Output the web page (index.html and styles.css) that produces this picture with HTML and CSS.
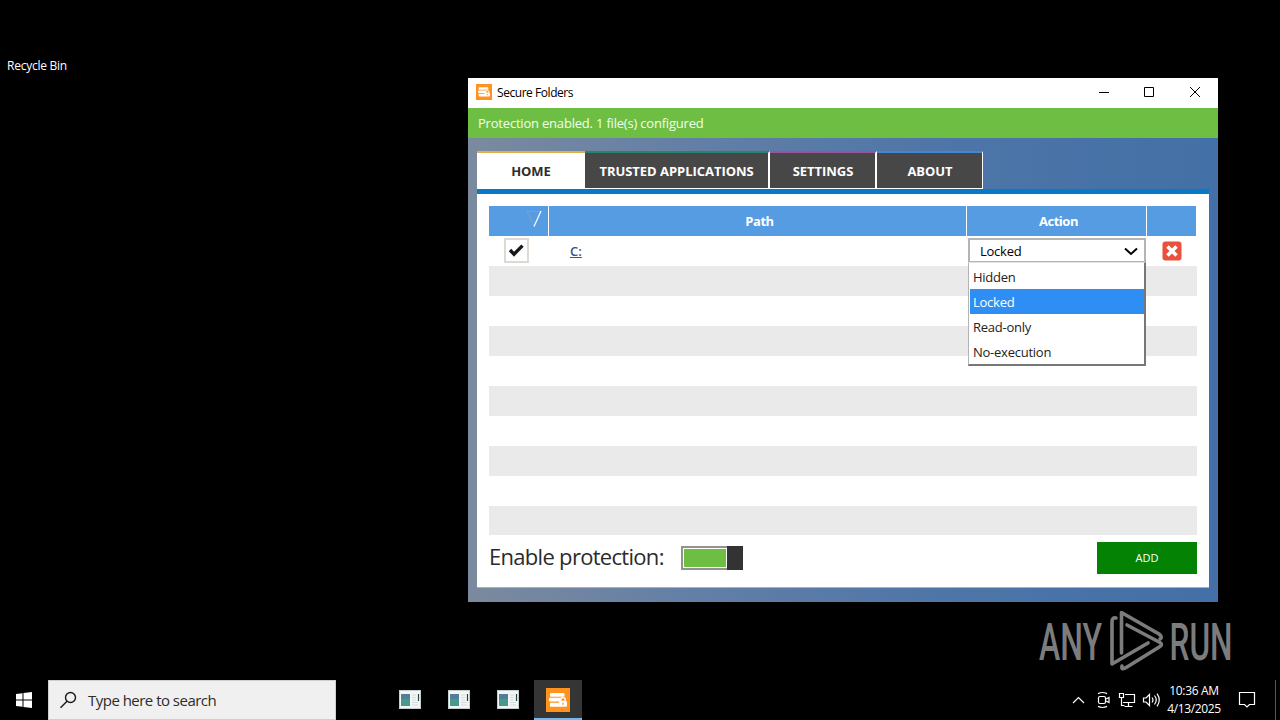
FILE: index.html
```html
<!DOCTYPE html>
<html lang="en">
<head>
<meta charset="utf-8">
<title>Secure Folders</title>
<link rel="stylesheet" href="styles.css">
</head>
<body>
<svg class="defs" width="0" height="0" aria-hidden="true">
  <symbol id="app" viewBox="0 0 24 24">
    <rect width="24" height="24" fill="#ff931e"/>
    <rect x="4" y="5" width="14.500" height="3.800" rx="1" fill="#fff"/>
    <rect x="3" y="9.800" width="12" height="3.700" rx="1" fill="#fff"/>
    <rect x="4" y="14.700" width="11" height="4" rx="1" fill="#fff"/>
    <path d="M14.800 13v-1.200a2.200 2.200 0 0 1 4.400 0V13" fill="none" stroke="#fff" stroke-width="1.500"/>
    <rect x="13" y="12.800" width="8" height="6" rx="1.500" fill="#fff"/>
    <path d="M17 14.700v2" stroke="#ff931e" stroke-width="1.300"/>
  </symbol>
  <symbol id="prog" viewBox="0 0 22 19">
    <rect width="22" height="19" fill="#f4f6f6"/>
    <path d="M0 .5h22M.5 0v19M21.5 0v19M0 18.5h22" stroke="#c4cccc"/>
    <rect x="2" y="4" width="9" height="12" fill="#459a8c"/>
    <path d="M2 4h9v5H2z" fill="#527e98"/>
    <path d="M13 5h4M13 7.500h4M13 10h4M13 12.500h6M13 15h6" stroke="#d3dcdc"/>
    <path d="M19.500 4v7" stroke="#294444" stroke-width="1.200"/>
  </symbol>
</svg>
<main class="desktop">
  <div class="bin">Recycle Bin</div>
  <section class="window">
    <header class="titlebar">
      <svg class="title-icon"><use href="#app"/></svg>
      <span class="title">Secure Folders</span>
      <svg class="controls" viewBox="0 0 104 14" fill="none" stroke="#000">
        <path d="M1 7.500h10M46.500 2.500h9v9h-9zM92 2l10 10M102 2L92 12"/>
      </svg>
    </header>
    <div class="status">Protection enabled. 1 file(s) configured</div>
    <div class="client">
      <nav class="tabs">
        <div class="tab home">HOME</div>
        <div class="tab trusted">TRUSTED APPLICATIONS</div>
        <div class="tab settings">SETTINGS</div>
        <div class="tab about">ABOUT</div>
      </nav>
      <div class="panel">
        <div class="thead">
          <div class="th sort"><svg width="16" height="18" viewBox="0 0 16 18" fill="none"><path d="M1 1.500h14M1 1.500l7 15" stroke="#7f9fc4"/><path d="M15 1L8 16.500" stroke="#fff" stroke-width="1.200"/></svg></div>
          <div class="th label">Path</div>
          <div class="th label">Action</div>
          <div class="th"></div>
        </div>
        <div class="rows">
          <div class="row entry">
            <div class="check"><svg width="18" height="16" viewBox="0 0 18 16"><path d="M2 7l4 4.200L14.500 2.600" fill="none" stroke="#16191c" stroke-width="3.400"/></svg></div>
            <a class="path">C:</a>
            <div class="select"><span>Locked</span><svg width="14" height="9" viewBox="0 0 14 9"><path d="M1 1.500l6 5.500 6-5.500" fill="none" stroke="#000" stroke-width="2"/></svg>
              <div class="menu">
                <div class="option">Hidden</div>
                <div class="option active">Locked</div>
                <div class="option">Read-only</div>
                <div class="option">No-execution</div>
              </div>
            </div>
            <svg class="remove" width="20" height="20" viewBox="0 0 20 20"><rect x=".5" y=".5" width="19" height="19" rx="3" fill="#e9513a"/><path d="M5.500 5.500l9 9M14.500 5.500l-9 9" stroke="#fff" stroke-width="3.600"/></svg>
          </div>
          <div class="row"></div><div class="row"></div><div class="row"></div><div class="row"></div>
          <div class="row"></div><div class="row"></div><div class="row"></div><div class="row"></div><div class="row last"></div>
        </div>
        <footer class="actions">
          <span class="enable">Enable protection:</span>
          <div class="toggle"><div class="track"></div><div class="knob"></div></div>
          <div class="add">ADD</div>
        </footer>
      </div>
    </div>
  </section>
  <svg class="watermark" viewBox="0 0 206 66">
    <text x="2" y="52" textLength="63" lengthAdjust="spacingAndGlyphs">ANY</text>
    <text x="132.500" y="52" textLength="63" lengthAdjust="spacingAndGlyphs">RUN</text>
    <g fill="none" stroke="#7c7c7c" stroke-width="3.600" stroke-linejoin="round" stroke-linecap="round">
      <path d="M79 10q-4-1-4 4v42l36-21"/>
      <path d="M84.500 45V4.500L122 26q4 3 1 5"/>
      <path d="M90 17l33 17.500q3 2 0 4L90 59q-6 4-5-1"/>
    </g>
  </svg>
</main>
<footer class="taskbar">
  <svg class="start" viewBox="0 0 16 16" fill="#fff"><path d="M0 2l6.500-.8v6.300H0zM7.500 1L16 0v7.500H7.500zM0 8.500h6.500v6.300L0 14zM7.500 8.500H16V16l-8.500-1z"/></svg>
  <div class="search">
    <svg width="18" height="18" viewBox="0 0 18 18" fill="none" stroke="#1a1a1a" stroke-width="1.400"><circle cx="10.500" cy="6.500" r="5"/><path d="M7 10.200L.5 16.700"/></svg>
    <span class="hint">Type here to search</span>
  </div>
  <div class="apps">
    <svg class="prog"><use href="#prog"/></svg>
    <svg class="prog"><use href="#prog"/></svg>
    <svg class="prog"><use href="#prog"/></svg>
    <div class="running"><svg width="24" height="24"><use href="#app"/></svg></div>
  </div>
  <div class="tray">
    <svg class="tray-icons" viewBox="0 0 88 18" fill="none" stroke="#fff" stroke-width="1.200">
      <path d="M1 12l5.500-5.500L12 12"/>
      <rect x="26.500" y="5.500" width="7" height="7" rx="1.500"/><path d="M34 8l3-1.500v5L34 10M26 2.600q4.500-2.200 9 0M26 15.400q4.500 2.200 9 0"/>
      <path d="M53 3.500h9.500v8H51M56.500 11.500v4M52.500 15.500h8M47.500 2.500h4v4h-4zM49.500 6.500v8h3"/>
      <path d="M71.500 7v4h2.500l3.500 3.500v-11L74 7zM80 6.500q2 2.500 0 5M82.500 4.500q3.500 4.500 0 9M85 2.700q4.500 6.300 0 12.600"/>
    </svg>
    <div class="clock"><span class="time">10:36 AM</span><span class="date">4/13/2025</span></div>
    <svg class="notice" width="18" height="18" viewBox="0 0 18 18" fill="none" stroke="#fff" stroke-width="1.200"><path d="M1.500 1.500h15v12h-5L9 16l-2.500-2.500h-5z"/></svg>
    <div class="peek"></div>
  </div>
</footer>
</body>
</html>
```
FILE: styles.css
```css
* { box-sizing: border-box; }
body { margin: 0; width: 1280px; height: 720px; overflow: hidden; background: #000; display: flex; flex-direction: column; font-family: "Open Sans", "Noto Sans", sans-serif; font-size: 12px; color: #000; white-space: nowrap; }
svg { display: block; flex: none; }
.defs { position: absolute; }
.desktop { position: relative; height: 680px; flex: none; }
.bin { padding: 57px 0 0 7px; line-height: 18px; color: #fff; letter-spacing: -.25px; }
.window { position: absolute; left: 468px; top: 78px; width: 750px; height: 524px; display: flex; flex-direction: column; background: #fff; }
.titlebar { height: 30px; display: flex; align-items: center; padding: 0 16px 2px 8px; }
.title-icon { width: 16px; height: 16px; }
.title { margin-left: 5px; flex: 1; padding-top: 1px; letter-spacing: -.45px; }
.controls { width: 104px; height: 14px; }
.status { height: 30px; padding-left: 10px; line-height: 30px; background: #6fbe44; color: #f0ffe8; font-size: 13px; letter-spacing: -.2px; }
.client { flex: 1; padding: 13px 9px 14px; background: linear-gradient(90deg, #7b8a9e 0%, #637fa6 30%, #4d75a8 65%, #4370a6 100%); }
.tabs { display: flex; height: 38px; }
.tab { height: 38px; border-top: 2px solid; border-right: 2px solid #fff; border-bottom: 1px solid #fff; background: #474747; color: #fff; display: flex; align-items: center; justify-content: center; font-size: 13px; font-weight: 700; letter-spacing: -.05px; }
.home { width: 108px; background: #fff; color: #2d2d2d; border-top-color: #deb052; border-right: 0; }
.trusted { width: 185px; border-top-color: #288568; letter-spacing: -.04px; }
.settings { width: 107px; padding-left: 1px; border-top-color: #9d539b; }
.about { width: 106px; padding-left: 1px; border-top-color: #4386d1; border-right-width: 1px; }
.panel { height: 399px; border-top: 5px solid #0878c8; border-bottom: 1px solid #a6b1bd; background: #fff; padding: 12px 12px 0; }
.thead { display: grid; grid-template-columns: 60px 418px 180px 49px; width: 707px; height: 30px; }
.th { background: #569ce3; border-right: 1px solid #fff; color: #fff; font-weight: 700; font-size: 13px; letter-spacing: -.45px; display: flex; align-items: center; justify-content: center; }
.th:last-child { border-right: 0; }
.label { padding-left: 4px; }
.sort { justify-content: flex-end; padding: 0 6px 4px 0; }
.row { height: 30px; }
.row:nth-child(even) { background: #eaeaea; }
.last { height: 29px; }
.entry { display: flex; align-items: center; padding: 0 0 1px 15px; }
.check { width: 25px; height: 25px; border: 2px solid #dedad3; display: flex; align-items: center; justify-content: center; }
.path { margin-left: 41px; width: 398px; padding-top: 1px; font-size: 13px; font-weight: 600; color: #405185; text-decoration: underline; }
.select { position: relative; width: 178px; height: 25px; border: 2px solid #b4b4b4; display: flex; align-items: center; justify-content: space-between; padding: 1px 6px 0 10px; font-size: 13px; letter-spacing: -.25px; }
.menu { position: absolute; z-index: 2; left: -2px; top: 22px; width: 178px; height: 104px; padding: 1px 0 0 1px; background: #fff; border: 1px solid #b4b4b4; border-top-color: #e4e4e4; border-right: 2px solid #777; border-bottom: 2px solid #777; }
.option { height: 25px; line-height: 23px; padding: 2px 0 0 3px; color: #222; }
.active { background: #2f8ef4; color: #fff; }
.remove { margin: 1px 0 0 16px; }
.actions { display: flex; align-items: center; height: 46px; }
.enable { width: 192px; padding-bottom: 5px; font-size: 22px; color: #2b2b2b; letter-spacing: -.7px; }
.toggle { display: flex; width: 62px; height: 24px; }
.track { width: 46px; border: 2px solid #929292; border-right: 0; background: #6fbe44; box-shadow: inset 0 0 0 1px #fff; }
.knob { width: 16px; background: #333; }
.add { margin-left: auto; width: 100px; height: 32px; line-height: 32px; background: #048204; color: #fff; text-align: center; font-size: 11px; }
.watermark { position: absolute; left: 1037px; top: 608px; width: 206px; height: 66px; }
.watermark text { font-family: Roboto, sans-serif; font-size: 52px; font-weight: 500; fill: #7c7c7c; }
.taskbar { height: 40px; display: flex; align-items: center; }
.start { width: 16px; height: 16px; margin: 0 16px; }
.search { width: 288px; height: 40px; background: #f0f0f0; border: 1px solid #cfcfcf; display: flex; align-items: center; padding-left: 11px; }
.hint { margin-left: 10px; font-size: 15px; color: #2c2c2c; letter-spacing: -.52px; }
.apps { display: flex; align-items: center; gap: 27px; margin-left: 63px; }
.prog { width: 22px; height: 19px; margin-bottom: 2px; }
.running { width: 48px; height: 40px; margin-left: -12px; display: flex; align-items: center; justify-content: center; padding-top: 2px; background: #353535; border-bottom: 2px solid #76b9ed; }
.tray { margin-left: auto; display: flex; align-items: center; height: 40px; color: #fff; }
.tray-icons { width: 88px; height: 18px; }
.clock { display: flex; flex-direction: column; align-items: center; width: 58px; margin-left: 5px; line-height: 18px; letter-spacing: -.35px; }
.notice { margin-left: 15px; }
.peek { width: 1px; height: 40px; margin: 0 4px 0 19px; background: #555; }
```
